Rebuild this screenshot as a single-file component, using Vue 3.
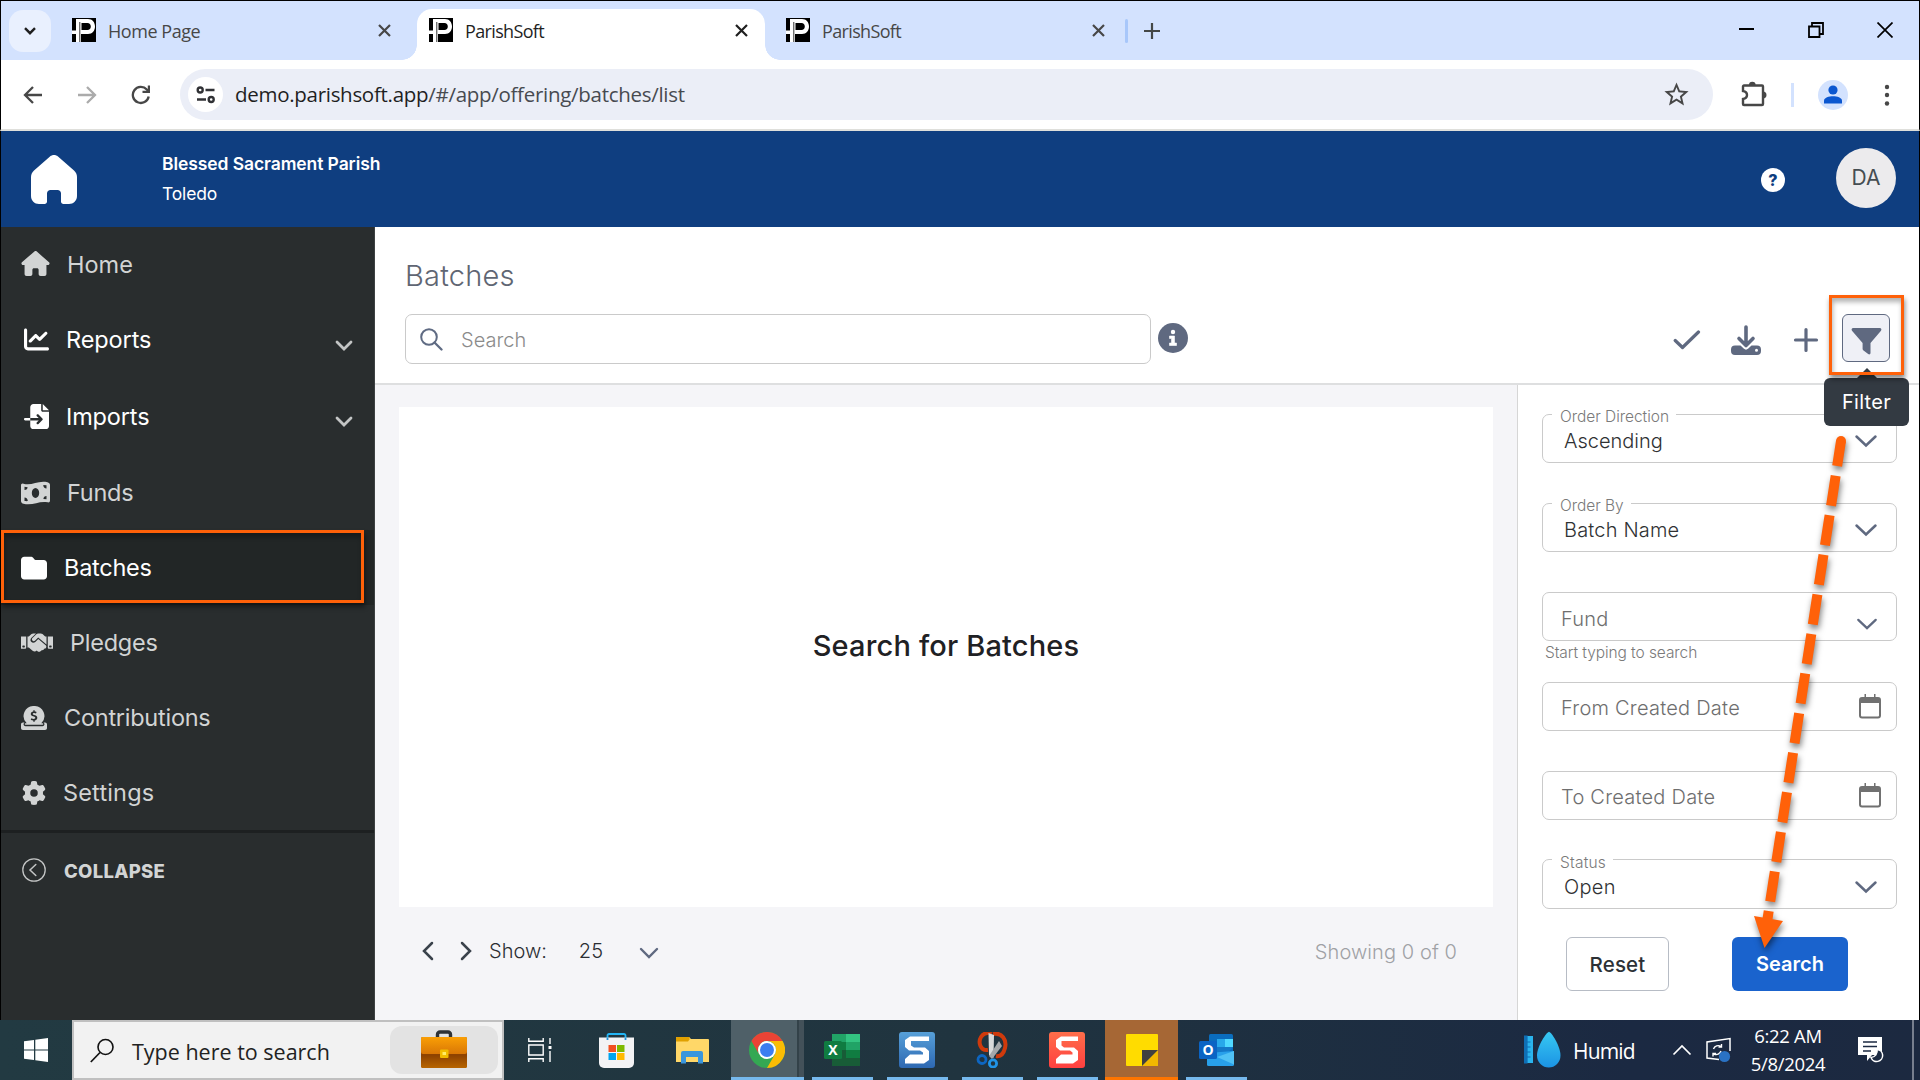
<script setup>
const tabs = [
  { title: 'Home Page', active: false, cls: 'tab-home' },
  { title: 'ParishSoft', active: true, cls: 'tab-current' },
  { title: 'ParishSoft', active: false, cls: 'tab-last' },
]

const nav = [
  { label: 'Home', cls: 'home', box: '0 0 576 512', d: 'M575.8 255.5c0 18-15 32.1-32 32.1h-32l.7 160.2c0 2.7-.2 5.4-.5 8.1V472c0 22.1-17.9 40-40 40H456c-1.1 0-2.2 0-3.3-.1c-1.4 .1-2.8 .1-4.2 .1H416 392c-22.1 0-40-17.9-40-40V448 384c0-17.7-14.3-32-32-32H256c-17.7 0-32 14.3-32 32v64 24c0 22.1-17.9 40-40 40H160 128.1c-1.5 0-3-.1-4.5-.2c-1.2 .1-2.4 .2-3.6 .2H104c-22.1 0-40-17.9-40-40V360c0-.9 0-1.9 .1-2.8V287.6H32c-18 0-32-14-32-32.1c0-9 3-17 10-24L266.4 8c7-7 15-8 22-8s15 2 21 7L564.8 231.5c8 7 12 15 11 24z' },
  { label: 'Reports', cls: 'reports', box: '0 0 512 512', open: true, d: 'M64 64c0-17.7-14.3-32-32-32S0 46.3 0 64V400c0 44.2 35.8 80 80 80H480c17.7 0 32-14.3 32-32s-14.3-32-32-32H80c-8.8 0-16-7.2-16-16V64zm406.6 86.6c12.5-12.5 12.5-32.8 0-45.3s-32.8-12.5-45.3 0L320 210.7l-57.4-57.4c-12.5-12.5-32.8-12.5-45.3 0l-112 112c-12.5 12.5-12.5 32.8 0 45.3s32.8 12.5 45.3 0L240 221.3l57.4 57.4c12.5 12.5 32.8 12.5 45.3 0l128-128z' },
  { label: 'Imports', cls: 'imports', box: '0 0 512 512', open: true, d: 'M128 64c0-35.3 28.7-64 64-64H352V128c0 17.7 14.3 32 32 32H512V448c0 35.3-28.7 64-64 64H192c-35.3 0-64-28.7-64-64V336H302.1l-39 39c-9.4 9.4-9.4 24.6 0 33.9s24.6 9.4 33.9 0l80-80c9.4-9.4 9.4-24.6 0-33.9l-80-80c-9.4-9.4-24.6-9.4-33.9 0s-9.4 24.6 0 33.9l39 39H128V64zm0 224v48H24c-13.3 0-24-10.7-24-24s10.7-24 24-24H128zM512 128H384V0L512 128z' },
  { label: 'Funds', cls: 'funds', box: '0 0 29 24', d: 'M0 4.5C0 3 1 2.3 2.4 2.7C11 5 17-1 26.5 1.2C28 1.6 29 2.5 29 4V19.5C29 21 28 21.7 26.6 21.3C18 19.5 12 25 2.5 22.8C1 22.5 0 21.5 0 20ZM14.5 7C12.4 7 10.8 9.2 10.8 12S12.4 17 14.5 17S18.2 14.8 18.2 12S16.6 7 14.5 7ZM3.5 5.8V9C5.5 9 6.6 7.8 6.6 6.2ZM3.5 16.5V20C5 20.2 6 20.2 6.8 20.1C6.8 18 5.5 16.5 3.5 16.5ZM25.5 4.3L22.3 4C22.3 6 23.5 7.5 25.5 7.5ZM25.5 15C23.7 15 22.5 16.2 22.4 18L25.5 18.2Z' },
  { label: 'Batches', cls: 'batches', box: '0 0 512 512', d: 'M64 480H448c35.3 0 64-28.7 64-64V160c0-35.3-28.7-64-64-64H288c-10.1 0-19.6-4.7-25.6-12.8L243.2 57.6C231.1 41.5 212.1 32 192 32H64C28.7 32 0 60.7 0 96V416c0 35.3 28.7 64 64 64z' },
  { label: 'Pledges', cls: 'pledges', box: '0 0 32 20', d: 'M0 3.5H5.2V14.5C5.2 15.3 4.7 15.8 4 15.8H0ZM2.6 12.6A1 1 0 1 0 2.6 14.5A1 1 0 1 0 2.6 12.6ZM26.8 3.5H32V15.8H28C27.3 15.8 26.8 15.3 26.8 14.5ZM29.4 12.6A1 1 0 1 0 29.4 14.5A1 1 0 1 0 29.4 12.6ZM6.5 3.5H7.8L10.5 1C11 .6 11.6 .4 12.2 .4H15L10.5 4.7C9.2 6 9.2 7.8 10.2 8.8C11.3 10 13.2 10 14.3 8.9L17.3 6.1L24.7 12.3C25.5 13 25.6 14.2 24.9 15C24.5 15.5 23.9 15.7 23.3 15.6C23 17 21.7 17.6 20.5 17.2C19.7 18.7 17.8 19.2 16.5 18.2L15.7 17.6C14.5 18.8 12.8 18.7 11.6 17.7L7.8 14.4H6.5ZM25.5 3.5H24.2L21.5 1C21 .6 20.4 .4 19.8 .4H17C16.5 .4 16 .6 15.6 1L11.5 5C10.8 5.7 10.8 6.9 11.4 7.6C12.1 8.4 13.2 8.3 13.9 7.7L17.2 4.6L25.5 11.6Z' },
  { label: 'Contributions', cls: 'contrib', box: '0 0 26 24', d: 'M13 0A10 10 0 0 1 20.3 17.2H21.5C22 17.2 22.3 17.5 22.3 18S22 18.7 21.5 18.7H4.5C4 18.7 3.7 18.4 3.7 18S4 17.2 4.5 17.2H5.7A10 10 0 0 1 13 0ZM12.3 4.3V5.5C10.8 5.7 9.8 6.6 9.8 8C9.8 11 14.3 10 14.3 11.8C14.3 12.6 13.6 12.9 12.8 12.9C11.9 12.9 11.1 12.6 10.4 12.2L9.7 13.8C10.5 14.2 11.4 14.5 12.3 14.6V15.8H13.7V14.5C15.3 14.3 16.3 13.3 16.3 11.8C16.3 8.8 11.8 9.3 11.8 8C11.8 7.4 12.4 7.1 13.2 7.1C13.9 7.1 14.5 7.3 15 7.5L15.6 5.9C15 5.7 14.4 5.5 13.7 5.5V4.3ZM2 16.5H3.5C2 17.5 2.3 20.2 4.5 20.2H21.5C23.7 20.2 24 17.5 22.5 16.5H24C25.2 16.5 26 17.4 26 18.5V22C26 23.2 25.2 24 24 24H2C.8 24 0 23.2 0 22V18.5C0 17.4 .8 16.5 2 16.5Z' },
  { label: 'Settings', cls: 'settings', box: '0 0 512 512', d: 'M495.9 166.6c3.2 8.7 .5 18.4-6.4 24.6l-43.3 39.4c1.1 8.3 1.7 16.8 1.7 25.4s-.6 17.1-1.7 25.4l43.3 39.4c6.9 6.2 9.6 15.9 6.4 24.6c-4.4 11.9-9.7 23.3-15.8 34.3l-4.7 8.1c-6.6 11-14 21.4-22.1 31.2c-5.9 7.2-15.7 9.6-24.5 6.8l-55.7-17.7c-13.4 10.3-28.2 18.9-44 25.4l-12.5 57.1c-2 9.1-9 16.3-18.2 17.8c-13.8 2.3-28 3.5-42.5 3.5s-28.7-1.2-42.5-3.5c-9.2-1.5-16.2-8.7-18.2-17.8l-12.5-57.1c-15.8-6.5-30.6-15.1-44-25.4L83.1 425.9c-8.8 2.8-18.6 .3-24.5-6.8c-8.1-9.8-15.5-20.2-22.1-31.2l-4.7-8.1c-6.1-11-11.4-22.4-15.8-34.3c-3.2-8.7-.5-18.4 6.4-24.6l43.3-39.4C64.6 273.1 64 264.6 64 256s.6-17.1 1.7-25.4L22.4 191.2c-6.9-6.2-9.6-15.9-6.4-24.6c4.4-11.9 9.7-23.3 15.8-34.3l4.7-8.1c6.6-11 14-21.4 22.1-31.2c5.9-7.2 15.7-9.6 24.5-6.8l55.7 17.7c13.4-10.3 28.2-18.9 44-25.4l12.5-57.1c2-9.1 9-16.3 18.2-17.8C227.3 1.2 241.5 0 256 0s28.7 1.2 42.5 3.5c9.2 1.5 16.2 8.7 18.2 17.8l12.5 57.1c15.8 6.5 30.6 15.1 44 25.4l55.7-17.7c8.8-2.8 18.6-.3 24.5 6.8c8.1 9.8 15.5 20.2 22.1 31.2l4.7 8.1c6.1 11 11.4 22.4 15.8 34.3zM256 336a80 80 0 1 0 0-160 80 80 0 1 0 0 160z' },
]

const fields = [
  { legend: 'Order Direction', value: 'Ascending', icon: 'chevron', cls: 'direction' },
  { legend: 'Order By', value: 'Batch Name', icon: 'chevron', cls: 'order' },
  { hint: 'Fund', helper: 'Start typing to search', icon: 'chevron', cls: 'fund' },
  { hint: 'From Created Date', icon: 'calendar', cls: 'from' },
  { hint: 'To Created Date', icon: 'calendar', cls: 'to' },
  { legend: 'Status', value: 'Open', icon: 'chevron', cls: 'status' },
]
</script>

<template>
  <div class="screen">
    <div class="tabstrip">
      <div class="tab-search"><svg width="12" height="8" viewBox="0 0 12 8"><path d="M1 1.2l5 5 5-5" fill="none" stroke="#1f1f1f" stroke-width="2.4" /></svg></div>
      <div v-for="(t, i) in tabs" :key="i" class="tab" :class="[t.cls, { active: t.active }]">
        <svg class="favicon" width="24" height="24" viewBox="0 0 24 24"><rect width="24" height="24" fill="#000" /><path d="M5 1H16C20.5 1 23 4.5 23 8.5S20.5 16 16 16H9V24H4V16H0V12.5H4V1ZM9.5 5V12H15.5C17.5 12 18.8 10.5 18.8 8.5S17.5 5 15.5 5Z" fill="#fff" fill-rule="evenodd" /><path d="M7.8 4v20" stroke="#000" stroke-width=".8" /></svg>
        <span class="tab-title">{{ t.title }}</span>
        <svg class="tab-close" width="13" height="13" viewBox="0 0 13 13"><path d="M1 1l11 11M12 1L1 12" stroke="currentColor" stroke-width="2.2" /></svg>
      </div>
      <div class="tab-divider"></div>
      <svg width="16" height="16" viewBox="0 0 16 16"><path d="M8 0v16M0 8h16" stroke="#444746" stroke-width="2.2" /></svg>
      <div class="win-controls">
        <svg width="16" height="16" viewBox="0 0 16 16"><path d="M0 7h15" stroke="#000" stroke-width="2" /></svg>
        <svg width="16" height="16" viewBox="0 0 16 16"><path d="M1 4.5h10.5V15H1ZM4 4V1h11v11h-3" fill="none" stroke="#000" stroke-width="1.8" /></svg>
        <svg width="16" height="16" viewBox="0 0 16 16"><path d="M.5 .5l15 15M15.5 .5L.5 15.5" stroke="#000" stroke-width="1.7" /></svg>
      </div>
    </div>

    <div class="toolbar">
      <svg class="back" width="20" height="20" viewBox="0 0 20 20"><path d="M19 10H2.5M10 2L2 10l8 8" fill="none" stroke="#474747" stroke-width="2.3" /></svg>
      <svg class="fwd" width="20" height="20" viewBox="0 0 20 20"><path d="M1 10h16.5M10 2l8 8-8 8" fill="none" stroke="#ababab" stroke-width="2.3" /></svg>
      <svg class="reload" width="20" height="20" viewBox="0 0 20 20"><path d="M17.7 11.5A8 8 0 1 1 15.8 4.6L18 7" fill="none" stroke="#474747" stroke-width="2.3" /><path d="M19 .5V8h-7.5V5.8H16.8V.5Z" fill="#474747" /></svg>
      <div class="omnibox">
        <div class="site-info"><svg width="20" height="18" viewBox="0 0 20 18"><g fill="none" stroke="#303135" stroke-width="2.4"><circle cx="4.2" cy="4" r="2.5" /><path d="M9.5 4H18.5M1 13.5H10" /><circle cx="15.2" cy="13.5" r="2.5" /></g></svg></div>
        <span class="url"><b>demo.parishsoft.app</b>/#/app/offering/batches/list</span>
        <svg class="star" width="29" height="29" viewBox="0 0 24 24"><path d="M22 9.24l-7.19-.62L12 2 9.19 8.63 2 9.24l5.46 4.73L5.82 21 12 17.27 18.18 21l-1.63-7.03L22 9.24zM12 15.4l-3.76 2.27 1-4.28-3.32-2.88 4.38-.38L12 6.1l1.71 4.04 4.38.38-3.32 2.88 1 4.28L12 15.4z" fill="#474747" /></svg>
      </div>
      <svg class="puzzle" width="26" height="26" viewBox="0 0 26 26"><path d="M3 4.5H21a1 1 0 0 1 1 1V23a1 1 0 0 1-1 1H3a1 1 0 0 1-1-1V18c3-.5 4-2 4-4s-1-3.5-4-4V5.5a1 1 0 0 1 1-1Z" fill="none" stroke="#474747" stroke-width="2.4" /><path d="M8 4a3.3 3.3 0 0 1 6.6 0ZM22 10.5a3.5 3.5 0 0 1 0 7Z" fill="#474747" /></svg>
      <div class="tool-divider"></div>
      <div class="profile"><svg width="18" height="19" viewBox="0 0 18 19"><circle cx="9" cy="5" r="4.6" fill="#0b57d0" /><path d="M0 18.5V15.8C0 12.5 5 11.3 9 11.3S18 12.5 18 15.8V18.5Z" fill="#0b57d0" /></svg></div>
      <svg class="dots" width="6" height="22" viewBox="0 0 6 22"><g fill="#474747"><circle cx="3" cy="3" r="2.2" /><circle cx="3" cy="11" r="2.2" /><circle cx="3" cy="19.5" r="2.2" /></g></svg>
    </div>

    <header class="appbar">
      <svg class="logo" width="46" height="49" viewBox="0 0 46 49"><path d="M19 1.6C21.3-.4 24.7-.4 27 1.6L43 15.5C45 17.2 46 19.5 46 22V41C46 45.5 42.5 49 38 49H32.5C31 49 30 48 30 46.5V38.5C30 36.5 28.5 35 26.5 35H19.5C17.5 35 16 36.5 16 38.5V46.5C16 48 15 49 13.5 49H8C3.5 49 0 45.5 0 41V22C0 19.5 1 17.2 3 15.5Z" fill="#fff" /></svg>
      <div class="org"><strong>Blessed Sacrament Parish</strong><span>Toledo</span></div>
      <div class="help">?</div>
      <div class="avatar">DA</div>
    </header>

    <div class="body">
      <nav class="sidebar">
        <div v-for="n in nav" :key="n.label" class="nav-item" :class="n.cls">
          <svg class="nav-icon" :viewBox="n.box"><path :d="n.d" fill="currentColor" fill-rule="evenodd" /></svg>
          <span>{{ n.label }}</span>
          <svg v-if="n.open" class="nav-chevron" width="18" height="12" viewBox="0 0 18 12"><path d="M2 2l7 7 7-7" fill="none" stroke="#c3c5c5" stroke-width="2.8" stroke-linecap="round" /></svg>
        </div>
        <div class="collapse">
          <svg width="24" height="24" viewBox="0 0 24 24"><circle cx="12" cy="12" r="11.2" fill="none" stroke="#c3c5c5" stroke-width="1.3" /><path d="M13.8 6.5L8 12l5.8 5.5" fill="none" stroke="#c3c5c5" stroke-width="1.5" stroke-linecap="round" /></svg>
          <span>COLLAPSE</span>
        </div>
        <div class="mark mark-batches"></div>
      </nav>

      <main class="main">
        <div class="page-head">
          <h1>Batches</h1>
          <div class="head-row">
            <div class="search">
              <svg width="23" height="23" viewBox="0 0 23 23"><circle cx="9" cy="9" r="7.8" fill="none" stroke="#5f6b83" stroke-width="2" /><path d="M14.5 14.5L21.5 21.5" stroke="#5f6b83" stroke-width="2.3" stroke-linecap="round" /></svg>
              <span>Search</span>
            </div>
            <svg class="info" width="30" height="30" viewBox="0 0 30 30"><circle cx="15" cy="15" r="15" fill="#5f6980" /><circle cx="15" cy="9" r="2.2" fill="#fff" /><path d="M11.5 13H16.5V20H18.5V22.5H11.5V20H13.5V15.5H11.5Z" fill="#fff" stroke="#fff" stroke-width=".6" stroke-linejoin="round" /></svg>
            <div class="actions">
              <svg width="28" height="22" viewBox="0 0 28 22"><path d="M2.2 11.5L9.5 18.5 25.5 3" fill="none" stroke="#5f6980" stroke-width="3.2" stroke-linecap="round" stroke-linejoin="round" /></svg>
              <svg width="30" height="30" viewBox="0 0 30 30"><path d="M15 2V19M8 13.5l7 7 7-7" fill="none" stroke="#5f6980" stroke-width="3.6" stroke-linecap="round" stroke-linejoin="round" /><path d="M4 20.5H9.5L13 23.8C14.2 24.9 15.8 24.9 17 23.8L20.5 20.5H26A4 4 0 0 1 30 24.5V26A4 4 0 0 1 26 30H4A4 4 0 0 1 0 26V24.5A4 4 0 0 1 4 20.5ZM25.5 23.8A1.5 1.5 0 1 0 25.5 26.8A1.5 1.5 0 1 0 25.5 23.8Z" fill="#5f6980" fill-rule="evenodd" /></svg>
              <svg width="26" height="26" viewBox="0 0 26 26"><path d="M13 2.5v21M2.5 13h21" stroke="#5f6980" stroke-width="3.2" stroke-linecap="round" /></svg>
              <div class="filter-btn"><svg width="31" height="28" viewBox="0 0 31 28"><path d="M2.2 1H28.8C30.3 1 30.9 2.6 30 3.7L19.5 16V26C19.5 27.3 18.2 27.8 17.2 27L12.5 23.6C11.9 23.2 11.6 22.6 11.6 22V16L1 3.7C.1 2.6 .7 1 2.2 1Z" fill="#5f6980" /></svg></div>
            </div>
          </div>
        </div>

        <div class="work">
          <section class="results">
            <div class="empty">Search for Batches</div>
            <div class="pager">
              <svg width="12" height="20" viewBox="0 0 12 20"><path d="M10 2L2 10l8 8" fill="none" stroke="#3a424b" stroke-width="2.5" stroke-linecap="round" /></svg>
              <svg class="next" width="12" height="20" viewBox="0 0 12 20"><path d="M2 2l8 8-8 8" fill="none" stroke="#3a424b" stroke-width="2.5" stroke-linecap="round" /></svg>
              <span class="show">Show:</span>
              <span class="count">25</span>
              <svg class="pick" width="20" height="12" viewBox="0 0 20 12"><path d="M2 2l8 8 8-8" fill="none" stroke="#5f6980" stroke-width="2.4" stroke-linecap="round" /></svg>
              <span class="range">Showing 0 of 0</span>
            </div>
          </section>

          <aside class="filters">
            <div v-for="f in fields" :key="f.cls" class="field-slot">
              <fieldset class="field" :class="[f.cls, { titled: f.legend }]">
                <legend v-if="f.legend">{{ f.legend }}</legend>
                <span v-if="f.value" class="value">{{ f.value }}</span>
                <span v-else class="hint">{{ f.hint }}</span>
                <svg v-if="f.icon === 'chevron'" class="chev" width="24" height="14" viewBox="0 0 24 14"><path d="M2.5 2.5l9.5 9 9.5-9" fill="none" stroke="#5f6980" stroke-width="2.5" stroke-linecap="round" /></svg>
                <svg v-else class="cal" width="22" height="25" viewBox="0 0 22 25"><path d="M3 4H19a2 2 0 0 1 2 2V21.5a2 2 0 0 1-2 2H3a2 2 0 0 1-2-2V6a2 2 0 0 1 2-2Z" fill="none" stroke="#717171" stroke-width="2" /><path d="M1 4H21V9H1ZM5.5 0H7V4H5.5ZM15 0H16.5V4H15Z" fill="#717171" /></svg>
              </fieldset>
              <div v-if="f.helper" class="helper">{{ f.helper }}</div>
            </div>
            <div class="buttons">
              <button class="reset">Reset</button>
              <button class="go">Search</button>
            </div>
          </aside>
        </div>
      </main>
    </div>

    <footer class="taskbar">
      <div class="start"><svg width="24" height="24" viewBox="0 0 24 24"><path d="M0 3.3L10 2V11.4H0ZM11.3 1.8L24 0V11.4H11.3ZM0 12.6H10V22L0 20.7ZM11.3 12.6H24V24L11.3 22.2Z" fill="#fff" /></svg></div>
      <div class="win-search">
        <svg width="25" height="25" viewBox="0 0 25 25"><circle cx="15.5" cy="9" r="7.5" fill="none" stroke="#111" stroke-width="1.6" /><path d="M10 14.5L.8 24" stroke="#111" stroke-width="1.7" /></svg>
        <span>Type here to search</span>
        <div class="pill">
          <svg width="46" height="38" viewBox="0 0 46 38"><defs><linearGradient id="case" x1="0" y1="0" x2="0" y2="1"><stop offset="0" stop-color="#fa9f05" /><stop offset="1" stop-color="#d97706" /></linearGradient><linearGradient id="case2" x1="0" y1="0" x2="0" y2="1"><stop offset="0" stop-color="#8f4300" /><stop offset=".6" stop-color="#8f4300" /><stop offset="1" stop-color="#b86500" /></linearGradient></defs><path d="M16.5 7V4.5A2.5 2.5 0 0 1 19 2H27A2.5 2.5 0 0 1 29.5 4.5V7" fill="none" stroke="#2e3236" stroke-width="3.4" /><rect y="7" width="46" height="31" rx="1.5" fill="url(#case2)" /><path d="M0 8.5A1.5 1.5 0 0 1 1.5 7H44.5A1.5 1.5 0 0 1 46 8.5V22A2 2 0 0 1 44 24H2A2 2 0 0 1 0 22Z" fill="url(#case)" /><rect x="19" y="19.5" width="8.5" height="8.5" rx="1" fill="#f2bd00" /><rect x="21.5" y="22" width="3.5" height="3" fill="#ffec66" /></svg>
        </div>
      </div>
      <div class="task view"><svg width="24" height="24" viewBox="0 0 24 24"><path d="M.8 0V3.3H15.2V0M.8 24V20.7H15.2V24M.8 7H15.2V17H.8ZM22 0V6M22 13V24" fill="none" stroke="#fff" stroke-width="1.4" /><rect x="20.5" y="8" width="3" height="3" fill="#fff" /></svg></div>
      <div class="task store"><svg width="35" height="35" viewBox="0 0 35 35"><path d="M8.5 7V2.5A1.5 1.5 0 0 1 10 1H25A1.5 1.5 0 0 1 26.5 2.5V7" fill="none" stroke="#23b5f5" stroke-width="1.8" /><path d="M0 4.5H35V30A5 5 0 0 1 30 35H5A5 5 0 0 1 0 30Z" fill="#f3f3f5" /><path d="M8.5 4.5V7M26.5 4.5V7" stroke="#1f8fd6" stroke-width="1.8" /><path d="M9.5 12H17V19H9.5Z" fill="#f25022" /><path d="M18 12H25.5V19H18Z" fill="#7fba00" /><path d="M9.5 20H17V27H9.5Z" fill="#00a4ef" /><path d="M18 20H25.5V27H18Z" fill="#ffb900" /></svg></div>
      <div class="task explorer"><svg width="33" height="27" viewBox="0 0 33 27"><path d="M0 1A1 1 0 0 1 1 0H13L15 2H32A1 1 0 0 1 33 3V25H0Z" fill="#ffd768" /><path d="M0 1A1 1 0 0 1 1 0H13.5V2.5L12 4.5H0Z" fill="#e0a000" /><path d="M5 26.5V16A2 2 0 0 1 7 14H25A2 2 0 0 1 27 16V26.5H22V20H10V26.5Z" fill="#3a96dd" /></svg></div>
      <div class="task chrome running"><svg width="36" height="36" viewBox="0 0 48 48"><circle cx="24" cy="24" r="24" fill="#34a853" /><path d="M3.2 12A24 24 0 0 1 44.8 12H24A12 12 0 0 0 13.6 30Z" fill="#ea4335" /><path d="M44.8 12A24 24 0 0 1 24 48L34.4 30A12 12 0 0 0 24 12Z" fill="#fbbc04" /><circle cx="24" cy="24" r="12" fill="#fff" /><circle cx="24" cy="24" r="9.3" fill="#3c7df0" /></svg></div>
      <div class="task running"><svg width="36" height="32" viewBox="0 0 36 32"><path d="M8 0H22V8H8Z" fill="#21a366" /><path d="M22 0H36V8H22Z" fill="#33c481" /><path d="M8 8H22V16H8ZM22 16H36V24H22Z" fill="#107c41" /><path d="M22 8H36V16H22Z" fill="#21a366" /><path d="M8 16H22V24H36V32H8Z" fill="#185c37" /><rect y="7" width="18" height="18" rx="1.5" fill="#107c41" /><text x="9" y="21.3" text-anchor="middle" class="glyph">X</text></svg></div>
      <div class="task running"><svg width="36" height="36" viewBox="0 0 36 36"><defs><linearGradient id="snb" x1="0" y1="0" x2="0" y2="1"><stop offset="0" stop-color="#57a0d8" /><stop offset="1" stop-color="#2d68b2" /></linearGradient><linearGradient id="snr" x1="0" y1="0" x2="0" y2="1"><stop offset="0" stop-color="#ff6e4a" /><stop offset="1" stop-color="#ff4040" /></linearGradient></defs><rect width="36" height="36" rx="3" fill="url(#snb)" /><path d="M30 9V4.5H11L6 8V15L10 18.5H21L24 20.5V22.5H11L6 27V31.5H25L30 28V19L26 15.5H15L12 13.5V9Z" fill="#fff" /></svg></div>
      <div class="task running"><svg width="32" height="36" viewBox="0 0 32 36"><path d="M12 18C4 19 2 10 5 5C9-1 16 1 16 1M17 2C26 0 31 8 29 16C27.5 22 25 25 20 24" fill="none" stroke="#cf3a0c" stroke-width="4" /><path d="M12.5 1L18 3L17.5 26L13 23Z" fill="#d8dadb" /><path d="M26 14L23 9L13 24L16 27Z" fill="#a4a8ab" /><circle cx="6" cy="27.5" r="4" fill="none" stroke="#0d66c2" stroke-width="2.8" /><circle cx="17" cy="31.5" r="3.6" fill="none" stroke="#2094e8" stroke-width="2.8" /></svg></div>
      <div class="task running"><svg width="36" height="36" viewBox="0 0 36 36"><rect width="36" height="36" rx="3" fill="url(#snr)" /><path d="M29 9V4.5H12L7 8V15L11 18.5H21L23.5 20.5V22.5H12L7 27V31.5H24L29 28V19L25 15.5H15L12.5 13.5V9Z" fill="#fff" /></svg></div>
      <div class="task sticky"><svg width="32" height="32" viewBox="0 0 32 32"><rect width="32" height="32" rx="1" fill="#ffdc00" /><path d="M16 32H32V16Z" fill="#f2b800" /><path d="M16 16H32L16 32Z" fill="#404040" /></svg></div>
      <div class="task outlook running"><svg width="35" height="32" viewBox="0 0 35 32"><rect x="10" width="24" height="19" rx="1.5" fill="#0a6cbd" /><path d="M18 5H26V13H18Z" fill="#28a8ea" /><path d="M26 5H34V13H26Z" fill="#50d9ff" /><path d="M18 13H34L26 22L18 18Z" fill="#1478c8" /><path d="M8 19L35 17V30.5A1.5 1.5 0 0 1 33.5 32H9.5A1.5 1.5 0 0 1 8 30.5Z" fill="#28a0ea" /><path d="M35 17V30.5L18 23Z" fill="#50c2f5" /><rect y="7" width="18" height="18" rx="1.5" fill="#0a64c4" /><text x="9" y="21.3" text-anchor="middle" class="glyph">O</text></svg></div>

      <div class="tray">
        <svg width="37" height="38" viewBox="0 0 37 38"><defs><linearGradient id="drop" x1="0" y1="0" x2="0" y2="1"><stop offset="0" stop-color="#37c8f2" /><stop offset="1" stop-color="#1b93e4" /></linearGradient></defs><rect y="5" width="9" height="27" fill="#2ab4ee" /><path d="M0 5H3V32H0ZM3 11H6.5M3 16H6.5M3 21H6.5M3 26H6.5" fill="#0f6fb5" stroke="#0f6fb5" stroke-width="1.2" /><path d="M25 .8C27 .8 36.5 15 36.5 24.5A11.7 12 0 0 1 13 24.5C13 15 23 .8 25 .8Z" fill="url(#drop)" /></svg>
        <span class="humid">Humid</span>
        <svg class="up" width="20" height="12" viewBox="0 0 20 12"><path d="M1.5 10.5L10 2l8.5 8.5" fill="none" stroke="#fff" stroke-width="1.7" /></svg>
        <svg class="sync" width="25" height="26" viewBox="0 0 25 26"><path d="M24 14V1.5L1 5V21L13 22.5" fill="none" stroke="#fff" stroke-width="1.5" /><path d="M7.5 12A5 5 0 0 1 15 9.5M15.5 7V10H12.5M15 14A5 5 0 0 1 8 17M7 19.5V16.5H10" fill="none" stroke="#fff" stroke-width="1.4" /><circle cx="18.5" cy="19.5" r="5.6" fill="#2a72c4" /></svg>
        <div class="clock"><span>6:22 AM</span><span>5/8/2024</span></div>
        <svg class="note" width="26" height="26" viewBox="0 0 26 26"><path d="M0 0H24V18H14L9 24V18H0Z" fill="#fff" /><path d="M5 5H19M5 9.5H19M5 14H13" stroke="#1c2a42" stroke-width="1.5" /><path d="M19 12.5A6 6 0 1 1 13 20.5A6.5 6.5 0 0 0 19 12.5Z" fill="#1c2a42" stroke="#fff" stroke-width="1.5" /></svg>
        <div class="peek"></div>
      </div>
    </footer>

    <div class="tooltip">Filter</div>
    <div class="mark mark-filter"></div>
    <svg class="arrow" width="120" height="540" viewBox="1740 420 120 540">
      <circle cx="1841" cy="441" r="5" fill="#ff6109" />
      <path d="M1841 441L1767.5 919" fill="none" stroke="#ff6109" stroke-width="10" stroke-dasharray="30.4 9.65" stroke-dashoffset="5" />
      <path d="M1754 916L1783 921L1764.5 948Z" fill="#ff6109" />
    </svg>
  </div>
</template>

<style>
html, body { margin: 0; overflow: hidden; }
</style>

<style scoped>
* { box-sizing: border-box; }
svg { display: block; flex: none; }
.screen { position: relative; width: 1920px; height: 1080px; display: flex; flex-direction: column; background: #fff; font-family: Inter, "Liberation Sans", sans-serif; white-space: nowrap; overflow: hidden; }

/* Browser tabs */
.tabstrip { height: 60px; flex: none; display: flex; align-items: center; padding-left: 8px; background: #d3e2fe; border-top: 1px solid #000; border-left: 1px solid #000; border-right: 1px solid #000; font-family: "Open Sans", "Noto Sans", sans-serif; font-size: 18px; color: #474747; }
.tab-search { width: 42px; height: 42px; margin-right: 9px; border-radius: 14px; background: #e9f0fe; display: flex; align-items: center; justify-content: center; }
.tab { position: relative; width: 348px; height: 51px; margin: 8px 9px 0 0; padding: 0 17px 9px 12px; display: flex; align-items: center; }
.tab-last { margin-right: 3px; }
.tab.active { background: #fff; border-radius: 15px 15px 0 0; color: #1f1f1f; }
.tab.active::before, .tab.active::after { content: ""; position: absolute; bottom: 0; width: 15px; height: 15px; }
.tab.active::before { left: -15px; background: radial-gradient(circle at 0 0, transparent 14.5px, #fff 15px); }
.tab.active::after { right: -15px; background: radial-gradient(circle at 100% 0, transparent 14.5px, #fff 15px); }
.favicon { margin-right: 12px; }
.tab-title { margin-top: 2px; letter-spacing: -.65px; }
.tab-home .tab-title { letter-spacing: -.45px; }
.tab-close { margin-left: auto; }
.tab-divider { width: 3px; height: 24px; margin: 0 16px 0 0; background: #a8c7fa; border-radius: 2px; }
.win-controls { margin-left: auto; margin-right: 26px; padding-bottom: 2px; display: flex; gap: 53px; }

/* Address bar */
.toolbar { height: 71px; flex: none; display: flex; align-items: center; background: linear-gradient(#fff, #fff); border-left: 1px solid #000; border-right: 1px solid #000; border-bottom: 2px solid #dfdfdb; font-family: "Open Sans", "Noto Sans", sans-serif; }
.back { margin-left: 22px; }
.fwd { margin-left: 34px; }
.reload { margin-left: 34px; }
.omnibox { margin-left: 29px; width: 1533px; height: 51px; border-radius: 26px; background: #ebeef7; display: flex; align-items: center; padding: 0 22px 0 8px; }
.site-info { width: 35px; height: 35px; border-radius: 50%; background: #fff; display: flex; align-items: center; justify-content: center; }
.url { margin: -2px 0 0 12px; font-size: 20.5px; letter-spacing: -.29px; color: #474a50; }
.url b { font-weight: 400; color: #1f1f1f; }
.star { margin-left: auto; }
.puzzle { margin: -2px 0 0 28px; }
.tool-divider { width: 3px; height: 24px; margin-left: 24px; background: #d3e2fe; }
.profile { margin-left: 24px; width: 30px; height: 30px; border-radius: 50%; background: #d3e2fe; display: flex; align-items: center; justify-content: center; }
.dots { margin-left: 36px; }

/* Application header */
.appbar { height: 96px; flex: none; display: flex; align-items: center; background: #0f3e80; color: #fff; padding-left: 30px; border-left: 1px solid #000; border-right: 1px solid #000; }
.logo { margin-top: 1px; }
.org { margin-left: 85px; display: flex; flex-direction: column; font-size: 17.5px; line-height: 30px; }
.org strong { font-weight: 600; letter-spacing: -.09px; }
.org span { letter-spacing: -.15px; }
.help { margin-left: auto; margin-top: 2px; width: 24px; height: 24px; border-radius: 50%; background: #fff; color: #0f3e80; font-size: 16px; font-weight: 800; line-height: 24px; text-align: center; }
.avatar { margin: -2px 23px 0 51px; width: 60px; height: 60px; border-radius: 50%; background: #ecebed; color: #454d52; font-size: 21px; line-height: 60px; text-align: center; }

/* Side navigation */
.body { flex: 1; display: flex; min-height: 0; }
.sidebar { position: relative; width: 375px; flex: none; background: #292d2e; border-left: 1px solid #000; border-right: 1px solid #3d4142; color: #d2d4d4; font-size: 23.5px; }
.nav-item { height: 75px; display: flex; align-items: center; gap: 17px; padding-left: 20px; letter-spacing: -.25px; }
.nav-icon { width: 26px; height: 26px; }
.nav-item.home { letter-spacing: 0; }
.home .nav-icon { width: 29px; height: 25px; margin-top: -3px; }
.reports, .imports { padding-left: 23px; color: #fff; }
.nav-item.reports { letter-spacing: -.1px; }
.nav-item.imports { height: 78px; letter-spacing: -.15px; }
.reports .nav-icon, .imports .nav-icon { width: 25px; height: 25px; }
.funds .nav-icon { width: 29px; height: 24px; }
.batches { background: #222626; color: #fff; }
.pledges .nav-icon { width: 32px; height: 20px; }
.contrib .nav-icon { width: 26px; height: 24px; }
.nav-item.settings { padding-left: 21px; letter-spacing: .17px; }
.settings .nav-icon { width: 24px; height: 24px; }
.nav-chevron { margin: 12px 21px 0 auto; }
.collapse { height: 190px; border-top: 3px solid #1d2021; padding: 25px 0 0 21px; display: flex; align-items: flex-start; gap: 18px; font-size: 18.5px; font-weight: 800; line-height: 27px; letter-spacing: .3px; }
.mark { position: absolute; border: 3px solid #ff6109; box-shadow: 1px 4px 5px rgba(0, 0, 0, .45), inset 1px 4px 5px rgba(0, 0, 0, .3); }
.mark-batches { left: 0; top: 303px; width: 363px; height: 73px; }

/* Page heading */
.main { flex: 1; display: flex; flex-direction: column; border-right: 1px solid #000; }
.page-head { height: 158px; flex: none; padding: 29px 29px 0 30px; border-bottom: 2px solid #dedfe0; }
h1 { margin: 0; height: 40px; line-height: 40px; font-size: 29px; font-weight: 300; letter-spacing: .2px; color: #5f6673; }
.head-row { margin-top: 18px; display: flex; align-items: center; height: 50px; }
.search { width: 746px; height: 50px; border: 1px solid #cacaca; border-radius: 7px; display: flex; align-items: center; padding-left: 14px; font-size: 20px; font-weight: 300; color: #8b8b8b; }
.search span { margin: 2px 0 0 18px; }
.info { margin: -2px 0 0 7px; }
.actions { margin-left: auto; display: flex; align-items: center; }
.actions svg:nth-child(1) { margin-top: 2px; }
.actions svg:nth-child(2) { margin: 1px 0 0 30px; }
.actions svg:nth-child(3) { margin: 1px 0 0 32px; }
.filter-btn { width: 48px; height: 48px; margin: -2px 0 0 23px; padding-top: 4px; border: 1px solid #5f6980; border-radius: 6px; background: #eff0f6; display: flex; align-items: center; justify-content: center; }

/* Results */
.work { flex: 1; display: flex; min-height: 0; }
.results { width: 1142px; background: #f5f5f8; padding: 22px 24px 0; }
.empty { height: 500px; background: #fff; display: flex; align-items: center; justify-content: center; padding-bottom: 23px; font-size: 29px; font-weight: 500; letter-spacing: .16px; color: #1f2124; }
.pager { height: 88px; display: flex; align-items: center; padding: 0 36px 0 23px; font-size: 20px; font-weight: 300; color: #2b2e33; }
.next { margin-left: 26px; }
.show { margin-left: 17px; }
.count { margin-left: 32px; }
.pick { margin: 4px 0 0 36px; }
.range { margin: 1px 0 0 auto; letter-spacing: .08px; color: #9fa1a5; }

/* Filter panel */
.filters { flex: 1; border-left: 1px solid #d6d6d6; padding: 29px 22px 0 24px; background: #fff; }
.field-slot { height: 89.2px; display: flow-root; }
.field { position: relative; height: 49px; margin: 0; padding: 0 18px 0 20px; border: 1px solid #cacaca; border-radius: 7px; display: flex; align-items: center; min-width: 0; font-size: 20px; font-weight: 300; }
.field.titled { height: 58px; margin-top: -9px; }
.field legend { height: 18px; margin-left: -11px; padding: 3px 7px 0 8px; line-height: 18px; font-size: 15.5px; letter-spacing: -.04px; color: #7a7a7a; }
.status legend { letter-spacing: .2px; }
.value { margin: -3px 0 0 1px; color: #2f3133; }
.order .value { letter-spacing: .18px; }
.status .value { letter-spacing: .3px; }
.hint { margin: 4px 0 0 -2px; letter-spacing: .24px; color: #6e6e6e; }
.chev { margin: -3px 0 0 auto; }
.fund .chev { margin-top: 14px; width: 22px; }
.cal { margin: 0 -3px 0 auto; }
.helper { margin-left: 3px; font-size: 15.5px; line-height: 24px; font-weight: 300; letter-spacing: -.08px; color: #7a7a7a; }
.buttons { display: flex; justify-content: space-between; padding: 0 49px 0 24px; margin-top: -12px; }
button { height: 54px; padding: 0; border-radius: 6px; font: 500 20.5px/54px Inter, sans-serif; text-align: center; }
.reset { width: 103px; letter-spacing: .2px; background: #fff; border: 1px solid #b7bcc5; color: #2c3136; }
.go { width: 116px; background: #1a63cd; border: 0; color: #fff; font-weight: 600; font-size: 20px; }

/* Desktop taskbar */
.taskbar { height: 60px; flex: none; display: flex; background: linear-gradient(90deg, #223a42, #20343f 50%, #1b2942 85%, #1c2940); font-family: "Open Sans", "Noto Sans", sans-serif; }
.start { width: 72px; display: flex; align-items: center; justify-content: center; }
.win-search { width: 432px; background: #f2f2f2; border: 2px solid #c0c0c0; display: flex; align-items: center; padding: 0 4px 0 16px; font-size: 21.5px; color: #222; }
.win-search > span { margin: 2px 0 0 17px; }
.pill { margin-left: auto; width: 108px; height: 48px; border-radius: 12px; background: #e3e3e3; display: flex; justify-content: center; padding-top: 4px; }
.task { width: 75px; height: 60px; display: flex; align-items: center; justify-content: center; position: relative; }
.view { width: 72px; }
.store { width: 81px; }
.explorer { width: 74px; padding-right: 4px; }
.running::after { content: ""; position: absolute; left: 8px; right: 6px; bottom: 0; height: 3px; background: #76b9ed; }
.chrome { width: 73px; padding-right: 1px; background: linear-gradient(90deg, #4f6068 66px, #334249 66px 68px, #435159 68px); }
.chrome::after { left: 0; right: 0; }
.sticky { width: 73px; margin-left: 1px; background: #a66735; border-bottom: 3px solid #ff7500; padding-top: 3px; }
.outlook { padding-left: 1px; }
.glyph { font: 700 14px "Open Sans", sans-serif; fill: #fff; }
.tray { margin-left: auto; display: flex; align-items: center; color: #fff; height: 60px; }
.humid { width: 62px; margin: 2px 0 0 12px; font-size: 21px; letter-spacing: -.85px; }
.up { margin-left: 37px; }
.sync { margin-left: 14px; }
.clock { width: 76px; margin-left: 19px; font-size: 18.5px; line-height: 28px; letter-spacing: -.3px; display: flex; flex-direction: column; align-items: center; }
.note { margin-left: 32px; }
.peek { width: 2px; height: 60px; margin: 0 6px 0 28px; background: #777f8e; }

/* Callouts */
.mark-filter { left: 1829px; top: 295px; width: 75px; height: 80px; }
.tooltip { position: absolute; left: 1824px; top: 378px; width: 85px; height: 48px; border-radius: 6px; background: #333a42; color: #fff; font-size: 20px; line-height: 49px; letter-spacing: .3px; text-align: center; }
.tooltip::before { content: ""; position: absolute; left: 33px; top: -10px; border: 10px solid transparent; border-top: 0; border-bottom-color: #333a42; }
.arrow { position: absolute; left: 1740px; top: 420px; filter: drop-shadow(1px 4px 3px rgba(0, 0, 0, .5)); }
</style>
